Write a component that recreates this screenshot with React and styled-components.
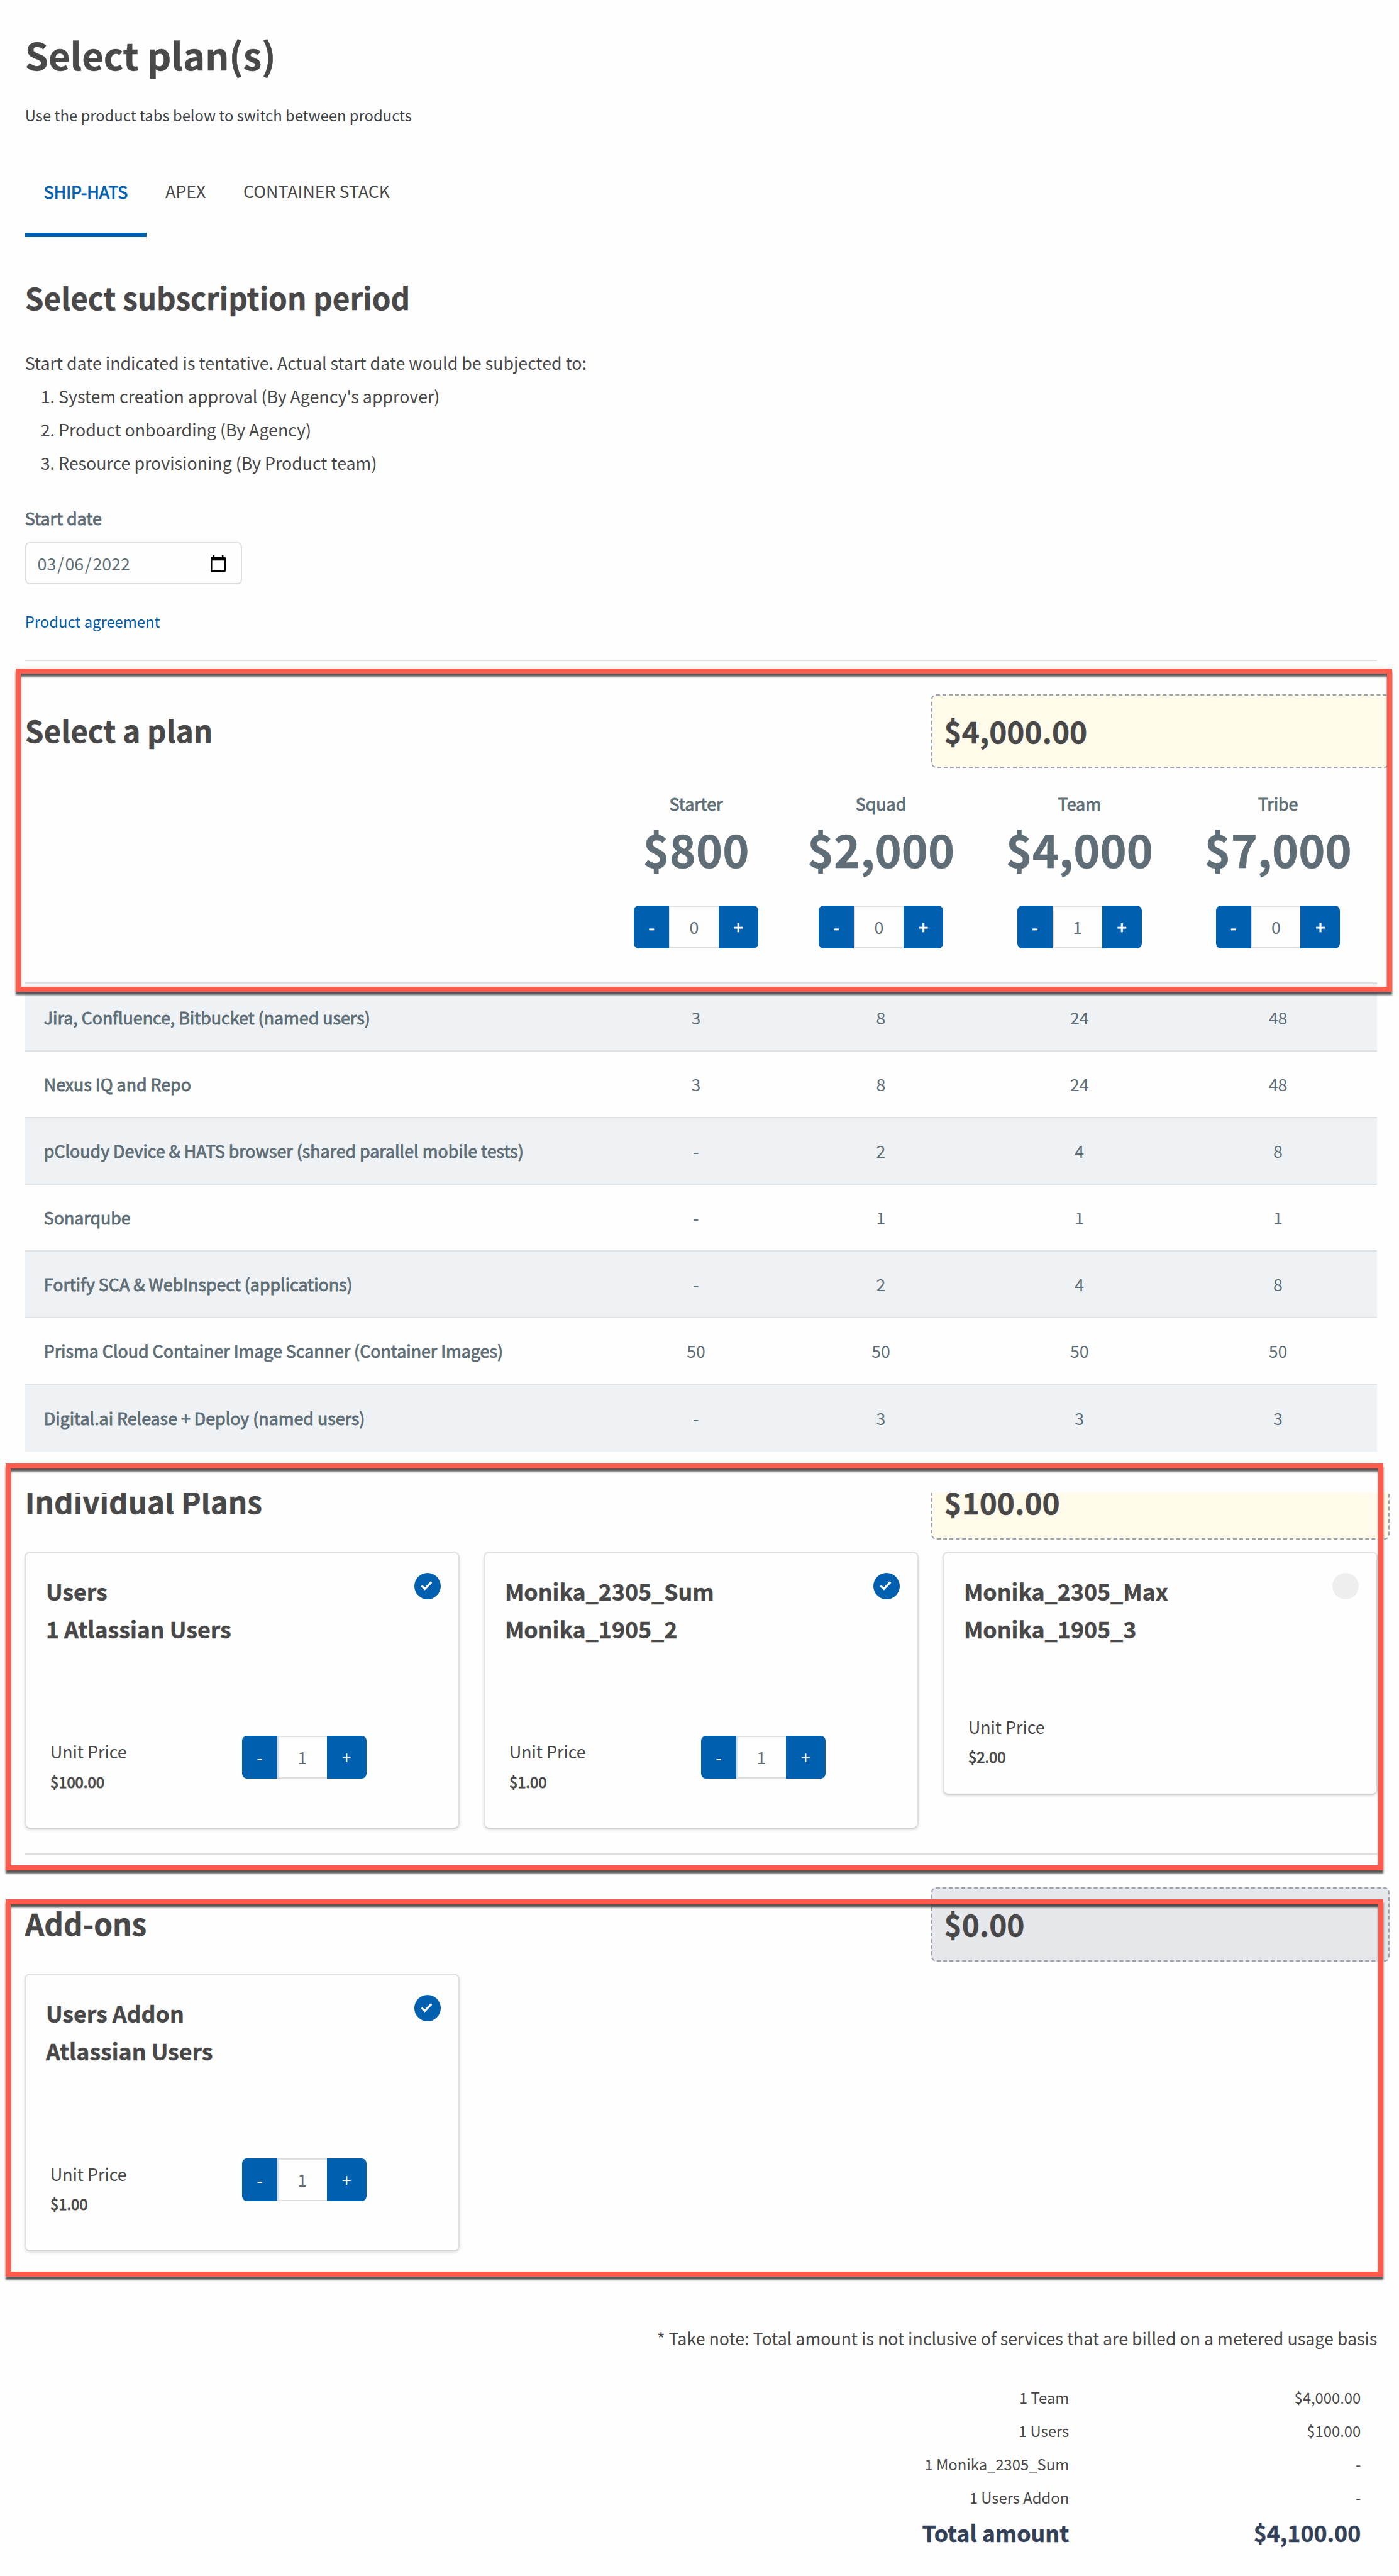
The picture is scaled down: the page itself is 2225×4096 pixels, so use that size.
import React from "react";
import styled, { createGlobalStyle, css } from "styled-components";

const ink = "#484848";
const slate = "#5f6e76";
const blue = "#0060af";
const line = "#dedede";

const GlobalStyle = createGlobalStyle`
  * { box-sizing: border-box; }
  html, body { margin: 0; padding: 0; }
  body {
    background: #fefefe;
    color: ${ink};
    font-family: "Noto Sans CJK SC", "Noto Sans", sans-serif;
    font-size: 26.78px;
    line-height: 40px;
  }
`;

/* Regular glyphs thickened slightly, keeping the regular widths. */
const semiBold = css`
  font-weight: 400;
  -webkit-text-stroke: 0.9px currentColor;
`;

const bold = css`
  font-weight: 700;
  -webkit-text-stroke: 0.5px currentColor;
`;

const Page = styled.main`
  width: 2225px;
  height: 4096px;
  overflow: hidden;
  padding: 49.6px 34.6px 0 39.8px;
`;

const PageTitle = styled.h1`
  margin: 0;
  font-size: 59.5px;
  line-height: 72px;
  ${bold}
`;

const Intro = styled.p`
  margin: 43.3px 0 0;
  font-size: 23.8px;
  line-height: 36px;
  color: #3f4347;
`;

const Tabs = styled.nav`
  display: flex;
  margin-top: 82.9px;
`;

const Tab = styled.a`
  padding: 0.5px 29.9px 45.3px;
  border-bottom: 7px solid transparent;
  ${({ $active }) =>
    $active &&
    css`
      ${semiBold}
      padding-top: 1.2px;
      padding-bottom: 44.6px;
      color: ${blue};
      border-bottom-color: ${blue};
    `}
`;

const Heading = styled.h2`
  margin: 0;
  font-size: 47.6px;
  line-height: 58px;
  ${bold}
`;

const PeriodBlock = styled.section`
  padding-top: 67.6px;
`;

const Terms = styled.div`
  margin-top: 47.4px;
  line-height: 53px;
`;

const TermList = styled.ol`
  margin: 0;
  padding-left: 53.2px;
`;

const FieldLabel = styled.label`
  display: block;
  margin-top: 42.6px;
  color: ${slate};
  ${semiBold}
`;

const DateField = styled.div`
  display: flex;
  align-items: center;
  justify-content: space-between;
  width: 345px;
  height: 67px;
  margin-top: 18.2px;
  padding: 0 23.4px 0 17.8px;
  border: 2px solid ${line};
  border-radius: 7px;
  color: ${slate};
`;

const Slash = styled.span`
  margin: 0 1.85px;
`;

const Agreement = styled.a`
  display: block;
  margin-top: 40.8px;
  font-size: 23.8px;
  line-height: 36px;
  color: ${blue};
`;

const Divider = styled.hr`
  height: 2px;
  margin: ${({ $gap }) => $gap}px 0 0;
  border: 0;
  background: ${line};
`;

const Section = styled.section`
  position: relative;
  margin-top: ${({ $gap }) => $gap}px;
`;

const Highlight = styled.div`
  position: absolute;
  top: ${({ $top }) => $top}px;
  right: ${({ $right }) => $right}px;
  bottom: ${({ $bottom }) => $bottom}px;
  left: ${({ $left }) => $left}px;
  border: 8.4px solid #ff5a4c;
  filter: drop-shadow(0 5px 1.4px rgba(0, 0, 0, 0.66));
  pointer-events: none;
`;

const HeaderClip = styled.div`
  margin-right: -20px;
  overflow: hidden;
  display: flex;
  flex-direction: column;
  justify-content: flex-end;
  height: ${({ $height }) => $height}px;
`;

const SectionHeader = styled.header`
  flex: none;
  display: flex;
  justify-content: space-between;
  height: 117.7px;
  ${Heading} { padding-top: 27.8px; }
`;

const Amount = styled.div`
  width: 729.6px;
  padding: 27.1px 18.8px 0;
  border: 2px dashed #9ca3af;
  border-radius: 8px;
  background: ${({ $muted }) => ($muted ? "#e5e7eb" : "#fffaea")};
  font-size: 47.6px;
  line-height: 58px;
  ${bold}
`;

const PlanGrid = styled.div`
  display: grid;
  grid-template-columns: 931px 272.4px 315.7px 315.8px 1fr;
  text-align: center;
  color: ${slate};
`;

const PlanHead = styled(PlanGrid)`
  padding: 36.5px 0 54.8px;
`;

const Plan = styled.div`
  display: flex;
  flex-direction: column;
  align-items: center;
`;

const PlanName = styled.div`
  ${semiBold}
`;

const PlanPrice = styled.div`
  margin: 6.8px 0 47.6px;
  font-size: 71.5px;
  line-height: 88px;
  ${bold}
`;

const StepperBox = styled.div`
  display: grid;
  grid-template-columns: 55.8px 78.8px 63px;
  width: 197.6px;
  height: 67.3px;
  line-height: 67px;
  text-align: center;
`;

const StepButton = styled.button`
  padding: 0 0 1px;
  border: 0;
  background: ${blue};
  color: #fff;
  font: inherit;
  border-radius: ${({ $end }) => ($end ? "0 8px 8px 0" : "8px 0 0 8px")};
  ${({ $strong }) => $strong && semiBold}
`;

const StepValue = styled.output`
  padding-right: 1px;
  line-height: 64px;
  border: solid ${line};
  border-width: 2px 0 2px 2px;
  color: ${slate};
  background: #fefefe;
`;

const Features = styled.div`
  border-top: 3px solid #dcdfe1;
`;

const FeatureRow = styled(PlanGrid)`
  height: 106.1px;
  padding-top: 1px;
  align-items: center;
  border-bottom: 2px solid #dee1e3;
  &:nth-child(odd) { background: #eef2f5; }
  &:last-child { border-bottom-color: transparent; }
`;

const FeatureName = styled.div`
  padding-left: 30px;
  text-align: left;
  ${semiBold}
`;

const Cards = styled.div`
  display: grid;
  grid-template-columns: repeat(3, 692px);
  gap: 38px;
  align-items: start;
  margin: 18.7px -0.8px 0;
`;

const CardBox = styled.article`
  padding: 31.5px 28.5px ${({ $compact }) => ($compact ? 41 : 55.2)}px 31.9px;
  border: 2px solid #e0e0e0;
  border-bottom-color: #d2d2d2;
  border-radius: 9px;
  box-shadow: 0 2px 4px rgba(0, 0, 0, 0.12);
  background: #fefefe;
`;

const CardTop = styled.div`
  display: flex;
  justify-content: space-between;
`;

const CardTitle = styled.h3`
  margin: 0;
  font-size: 35.7px;
  line-height: 60px;
  ${bold}
`;

const Mark = styled.span`
  width: 42px;
  height: 42px;
  margin-top: 1.2px;
  border-radius: 50%;
  background: ${({ $on }) => ($on ? blue : "#eeeeee")};
  svg { display: block; }
`;

const CardBottom = styled.div`
  display: grid;
  grid-template-columns: 312.1px auto;
  justify-content: start;
  align-items: start;
  margin-top: ${({ $compact }) => ($compact ? 105.5 : 140.3)}px;
`;

const Unit = styled.div`
  padding: ${({ $compact }) => ($compact ? 0 : 5.1)}px 0 0 7.1px;
`;

const UnitPrice = styled.div`
  margin-top: 9.7px;
  font-size: 23.8px;
  line-height: 36px;
  ${semiBold}
`;

const Note = styled.p`
  margin: 118.3px 0 46.8px;
  text-align: right;
`;

const Summary = styled.div`
  display: grid;
  grid-template-columns: 1fr 464px;
  padding-right: 26.2px;
  text-align: right;
  font-size: 23.8px;
  line-height: 53.15px;
`;

const Total = styled.div`
  font-size: 35.7px;
  line-height: 60px;
  color: #334158;
  ${bold}
`;

const plans = [
  ["Starter", "$800", 0],
  ["Squad", "$2,000", 0],
  ["Team", "$4,000", 1],
  ["Tribe", "$7,000", 0],
];

const features = [
  ["Jira, Confluence, Bitbucket (named users)", "3", "8", "24", "48"],
  ["Nexus IQ and Repo", "3", "8", "24", "48"],
  ["pCloudy Device & HATS browser (shared parallel mobile tests)", "-", "2", "4", "8"],
  ["Sonarqube", "-", "1", "1", "1"],
  ["Fortify SCA & WebInspect (applications)", "-", "2", "4", "8"],
  ["Prisma Cloud Container Image Scanner (Container Images)", "50", "50", "50", "50"],
  ["Digital.ai Release + Deploy (named users)", "-", "3", "3", "3"],
];

const individual = [
  { lines: ["Users", "1 Atlassian Users"], price: "$100.00", count: 1 },
  { lines: ["Monika_2305_Sum", "Monika_1905_2"], price: "$1.00", count: 1 },
  { lines: ["Monika_2305_Max", "Monika_1905_3"], price: "$2.00", count: 0 },
];

const addons = [{ lines: ["Users Addon", "Atlassian Users"], price: "$1.00", count: 1 }];

const summary = [
  ["1 Team", "$4,000.00"],
  ["1 Users", "$100.00"],
  ["1 Monika_2305_Sum", "-"],
  ["1 Users Addon", "-"],
];

const CalendarIcon = () => (
  <svg width="24" height="26.4" viewBox="0 0 86 94">
    <path
      fill="#000"
      fillRule="evenodd"
      d="M12 0h10v8h42V0h9v8h5a8 8 0 0 1 8 8v70a8 8 0 0 1-8 8H8a8 8 0 0 1-8-8V16a8 8 0 0 1 8-8h4zM9 29v57h69V29z"
    />
  </svg>
);

const CheckIcon = () => (
  <svg width="42" height="42" viewBox="0 0 142 142">
    <polyline points="39,69 56,86 92,49" fill="none" stroke="#fff" strokeWidth="11" />
  </svg>
);

const Stepper = ({ value, strong }) => (
  <StepperBox>
    <StepButton $strong={strong}>-</StepButton>
    <StepValue>{value}</StepValue>
    <StepButton $end $strong={strong}>+</StepButton>
  </StepperBox>
);

const Card = ({ lines, price, count }) => {
  const compact = count === 0;
  return (
    <CardBox $compact={compact}>
      <CardTop>
        <CardTitle>
          {lines[0]}
          <br />
          {lines[1]}
        </CardTitle>
        <Mark $on={!compact}>{!compact && <CheckIcon />}</Mark>
      </CardTop>
      <CardBottom $compact={compact}>
        <Unit $compact={compact}>
          Unit Price
          <UnitPrice>{price}</UnitPrice>
        </Unit>
        {!compact && <Stepper value={count} />}
      </CardBottom>
    </CardBox>
  );
};

export default function App() {
  return (
    <>
      <GlobalStyle />
      <Page>
        <PageTitle>Select plan(s)</PageTitle>
        <Intro>Use the product tabs below to switch between products</Intro>
        <Tabs>
          <Tab $active>SHIP-HATS</Tab>
          <Tab>APEX</Tab>
          <Tab>CONTAINER STACK</Tab>
        </Tabs>

        <PeriodBlock>
          <Heading>Select subscription period</Heading>
          <Terms>
            Start date indicated is tentative. Actual start date would be subjected to:
            <TermList>
              <li>System creation approval (By Agency's approver)</li>
              <li>Product onboarding (By Agency)</li>
              <li>Resource provisioning (By Product team)</li>
            </TermList>
          </Terms>
          <FieldLabel>Start date</FieldLabel>
          <DateField>
            <span>
              03<Slash>/</Slash>06<Slash>/</Slash>2022
            </span>
            <CalendarIcon />
          </DateField>
          <Agreement>Product agreement</Agreement>
        </PeriodBlock>
        <Divider $gap={42.6} />

        <Section $gap={53}>
          <HeaderClip $height={117.7}>
            <SectionHeader>
              <Heading>Select a plan</Heading>
              <Amount>$4,000.00</Amount>
            </SectionHeader>
          </HeaderClip>
          <PlanHead>
            <span />
            {plans.map(([name, price, count]) => (
              <Plan key={name}>
                <PlanName>{name}</PlanName>
                <PlanPrice>{price}</PlanPrice>
                <Stepper value={count} strong />
              </Plan>
            ))}
          </PlanHead>
          <Highlight $top={-40.6} $right={-23.3} $bottom={-14.8} $left={-14.9} />
        </Section>
        <Features>
          {features.map(([name, ...values]) => (
            <FeatureRow key={name}>
              <FeatureName>{name}</FeatureName>
              {values.map((value, i) => (
                <div key={i}>{value}</div>
              ))}
            </FeatureRow>
          ))}
        </Features>

        <Section $gap={66.1}>
          <HeaderClip $height={73.7}>
            <SectionHeader>
              <Heading>Individual Plans</Heading>
              <Amount>$100.00</Amount>
            </SectionHeader>
          </HeaderClip>
          <Cards>
            {individual.map((item) => (
              <Card key={item.lines[0]} {...item} />
            ))}
          </Cards>
          <Divider $gap={38.7} />
          <Highlight $top={-46.9} $right={-9.8} $bottom={-25} $left={-31.3} />
        </Section>

        <Section $gap={52.4}>
          <HeaderClip $height={117.7}>
            <SectionHeader>
              <Heading>Add-ons</Heading>
              <Amount $muted>$0.00</Amount>
            </SectionHeader>
          </HeaderClip>
          <Cards>
            {addons.map((item) => (
              <Card key={item.lines[0]} {...item} />
            ))}
          </Cards>
          <Highlight $top={19.1} $right={-9.8} $bottom={-40} $left={-31.3} />
        </Section>

        <Note>* Take note: Total amount is not inclusive of services that are billed on a metered usage basis</Note>
        <Summary>
          {summary.map(([label, value]) => (
            <React.Fragment key={label}>
              <div>{label}</div>
              <div>{value}</div>
            </React.Fragment>
          ))}
          <Total>Total amount</Total>
          <Total>$4,100.00</Total>
        </Summary>
      </Page>
    </>
  );
}
